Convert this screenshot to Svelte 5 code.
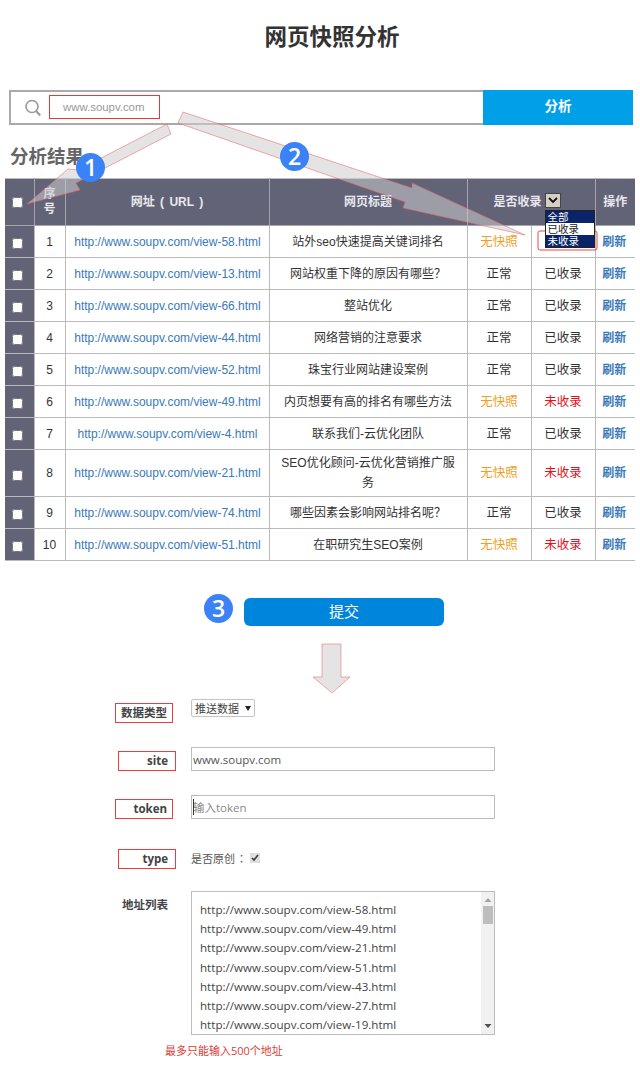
<script lang="ts">
  const rows = [
    { id: 58, title: '站外seo快速提高关键词排名', snap: false, indexed: true },
    { id: 13, title: '网站权重下降的原因有哪些？', snap: true, indexed: true },
    { id: 66, title: '整站优化', snap: true, indexed: true },
    { id: 44, title: '网络营销的注意要求', snap: true, indexed: true },
    { id: 52, title: '珠宝行业网站建设案例', snap: true, indexed: true },
    { id: 49, title: '内页想要有高的排名有哪些方法', snap: false, indexed: false },
    { id: 4, title: '联系我们-云优化团队', snap: true, indexed: true },
    { id: 21, title: 'SEO优化顾问-云优化营销推广服务', snap: false, indexed: false },
    { id: 74, title: '哪些因素会影响网站排名呢？', snap: true, indexed: true },
    { id: 51, title: '在职研究生SEO案例', snap: false, indexed: false }
  ];

  const urls = [58, 49, 21, 51, 43, 27, 19];
</script>

<div class="page">
  <h1>网页快照分析</h1>

  <div class="search">
    <svg class="search-icon" width="20" height="20" viewBox="0 0 20 20">
      <circle cx="9" cy="8.5" r="6" fill="none" stroke="#999" stroke-width="1.6" />
      <path d="M13.2 13l4 4.5" stroke="#999" stroke-width="2" fill="none" />
    </svg>
    <div class="search-input">www.soupv.com</div>
    <div class="search-btn">分析</div>
  </div>

  <h2>分析结果</h2>

  <table>
    <colgroup>
      <col style="width:29px" />
      <col style="width:31px" />
      <col style="width:204px" />
      <col style="width:198px" />
      <col style="width:64px" />
      <col style="width:64px" />
      <col style="width:40px" />
    </colgroup>
    <thead>
      <tr>
        <th><input type="checkbox" /></th>
        <th>序号</th>
        <th class="url-head">网址 ( URL )</th>
        <th>网页标题</th>
        <th colspan="2" class="status-head">
          <span class="status-label">是否收录</span>
          <span class="filter">
            <svg width="10" height="7" viewBox="0 0 10 7"><path d="M1 1l4 4 4-4" fill="none" stroke="#111" stroke-width="1.8" /></svg>
          </span>
          <div class="filter-menu">
            <div class="on">全部</div>
            <div>已收录</div>
            <div class="on">未收录</div>
          </div>
        </th>
        <th>操作</th>
      </tr>
    </thead>
    <tbody>
      {#each rows as row, i}
        <tr>
          <td class="check"><input type="checkbox" /></td>
          <td class="num">{i + 1}</td>
          <td class="url">http://www.soupv.com/view-{row.id}.html</td>
          <td class="title">{row.title}</td>
          <td class="state" class:warn={!row.snap}>{row.snap ? '正常' : '无快照'}</td>
          <td class="state" class:bad={!row.indexed}>{row.indexed ? '已收录' : '未收录'}</td>
          <td class="refresh">刷新</td>
        </tr>
      {/each}
    </tbody>
  </table>

  <div class="submit">提交</div>

  <div class="form">
    <div class="row">
      <div class="label boxed">数据类型</div>
      <div class="select">推送数据<span class="caret"></span></div>
    </div>
    <div class="row">
      <div class="label boxed wide">site</div>
      <div class="input">www.soupv.com</div>
    </div>
    <div class="row">
      <div class="label boxed">token</div>
      <div class="input placeholder"><span class="cursor"></span>输入token</div>
    </div>
    <div class="row type-row">
      <div class="label boxed wide">type</div>
      <div class="original">是否原创<span class="colon">：</span><input type="checkbox" checked /></div>
    </div>
    <div class="row list-row">
      <div class="label plain">地址列表</div>
      <div class="textarea">
        <div class="lines">
          {#each urls as id}
            <div>http://www.soupv.com/view-{id}.html</div>
          {/each}
        </div>
        <div class="scrollbar">
          <svg width="8" height="6" viewBox="0 0 8 6"><path d="M4 1l3.5 4H.5z" fill="#a3a3a3" /></svg>
          <div class="thumb"></div>
          <svg class="down" width="8" height="6" viewBox="0 0 8 6"><path d="M4 5L.5 1h7z" fill="#505050" /></svg>
        </div>
      </div>
    </div>
    <div class="note">最多只能输入500个地址</div>
  </div>

  <!-- annotations drawn over the screenshot -->
  <svg class="marks" width="640" height="1081" viewBox="0 0 640 1081">
    <g fill="rgba(205,205,205,0.55)" stroke="rgba(235,90,90,0.5)" stroke-width="1">
      <polygon points="167,124 171,134 76,183 80,190 27,204 68,169 78,170" />
      <polygon points="183,112 412,188 412,183 525,235 403,208 405,202 178,123" />
      <polygon points="322,644 341,644 341,677 350,677 332,693 313,677 322,677" />
    </g>
    <rect x="538" y="231" width="59" height="19" rx="2" fill="none" stroke="#ef4444" stroke-width="1" />
  </svg>
  <div class="badge one">1</div>
  <div class="badge two">2</div>
  <div class="badge three">3</div>
</div>

<style>
  :global(body) {
    margin: 0;
    background: #fff;
  }

  .page {
    position: relative;
    width: 640px;
    height: 1081px;
    overflow: hidden;
    font-family: "Liberation Sans", "Noto Sans CJK SC", sans-serif;
    font-size: 12px;
    color: #333;
  }

  h1 {
    margin: 0;
    padding: 23px 0 0 24px;
    height: 29px;
    line-height: 30px;
    text-align: center;
    font-size: 22.5px;
    font-weight: 700;
    color: #333;
  }

  .search {
    display: flex;
    align-items: center;
    box-sizing: border-box;
    width: 624px;
    height: 35px;
    margin: 38px 0 0 9px;
    border: 2px solid #aaa;
    border-right: 0;
  }

  .search-icon {
    margin-left: 12px;
  }

  .search-input {
    box-sizing: border-box;
    width: 111px;
    height: 24px;
    margin: -1px 0 0 6px;
    padding-left: 13px;
    line-height: 22px;
    border: 1px solid #e53935;
    font-size: 11.4px;
    color: #999;
  }

  .search-btn {
    margin: -2px 0 -2px auto;
    width: 150px;
    height: 35px;
    line-height: 33px;
    text-align: center;
    background: #00a0e9;
    color: #fff;
    font-size: 13.5px;
    font-weight: 700;
  }

  h2 {
    margin: 20px 0 0 10px;
    height: 24px;
    line-height: 24px;
    font-size: 18.5px;
    font-weight: 700;
    color: #666;
  }

  table {
    width: 630px;
    margin: 9px 0 0 5px;
    table-layout: fixed;
    border-collapse: collapse;
  }

  th {
    height: 46px;
    padding: 0 4px;
    background: #636378;
    color: #e8e8ee;
    font-size: 12px;
    font-weight: 700;
    line-height: 15px;
    border: 1px solid #a5a5ae;
    border-top-color: #bbb;
  }

  th:first-child {
    padding: 0;
  }

  th:first-child,
  td:first-child {
    border-left: 0;
  }

  th:last-child,
  td:last-child {
    border-right: 0;
  }

  input[type="checkbox"] {
    display: block;
    width: 11px;
    height: 11px;
    margin: 0 0 0 7px;
  }

  .url-head {
    word-spacing: 2px;
  }

  .status-head {
    position: relative;
    text-align: left;
    padding-left: 26px;
  }

  .status-label {
    vertical-align: middle;
  }

  .filter {
    display: inline-flex;
    align-items: center;
    justify-content: center;
    box-sizing: border-box;
    width: 16px;
    height: 15px;
    vertical-align: 2px;
    background: #d6d0c4;
    border: 1px solid #444;
  }

  .filter-menu {
    position: absolute;
    left: 77px;
    top: 31px;
    z-index: 2;
    width: 48px;
    border: 1px solid #222;
    background: #fff;
    color: #222;
    font-size: 10.5px;
    font-weight: 400;
    line-height: 12px;
    text-align: left;
  }

  .filter-menu div {
    padding-left: 2px;
  }

  .filter-menu .on {
    background: #0a246a;
    color: #fff;
  }

  td {
    height: 23px;
    padding: 4px 10px;
    line-height: 20px;
    text-align: center;
    border: 1px solid #bbb;
  }

  tbody tr {
    height: 32px;
  }

  .check {
    padding: 0;
    background: #636378;
  }

  .check input {
    margin-top: 4px;
  }

  .num {
    padding: 0;
  }

  .url {
    padding: 4px 0 4px 1px;
    color: #3a7ab8;
  }

  .title {
    padding: 3px 10px;
    color: #333;
  }

  .state {
    padding: 4px 0;
    font-size: 12.5px;
  }

  .warn {
    color: #f0a01e;
  }

  .bad {
    color: #e8101a;
  }

  .refresh {
    padding: 4px 2px 4px 0;
    color: #3a7ab8;
    font-weight: 700;
  }

  .submit {
    width: 200px;
    height: 28px;
    margin: 37px 0 0 244px;
    line-height: 28px;
    text-align: center;
    border-radius: 6px;
    background: #0085dd;
    color: #fff;
    font-size: 15px;
  }

  .form {
    margin-top: 73px;
    font-family: "Open Sans", "Noto Sans CJK SC", sans-serif;
    font-size: 11.5px;
    color: #444;
  }

  .row {
    display: flex;
    align-items: flex-start;
    height: 48px;
  }

  .label {
    box-sizing: border-box;
    width: 58px;
    height: 20px;
    padding-right: 5px;
    line-height: 18px;
    margin: 4px 18px 0 115px;
    text-align: right;
    font-weight: 700;
    color: #444;
  }

  .boxed {
    border: 1px solid #ee3b3b;
  }

  .wide {
    margin-left: 118px;
    margin-right: 15px;
    padding-right: 7px;
  }

  .plain {
    margin-top: 5px;
  }

  .select {
    display: flex;
    align-items: center;
    box-sizing: border-box;
    width: 64px;
    height: 18px;
    padding-left: 3px;
    border: 1px solid #c4c4c4;
    border-radius: 2px;
    font-size: 11px;
  }

  .caret {
    margin-left: 6px;
    border: 3px solid transparent;
    border-top: 5px solid #222;
    border-bottom: 0;
  }

  .input {
    position: relative;
    box-sizing: border-box;
    width: 304px;
    height: 24px;
    padding-left: 1px;
    line-height: 24px;
    border: 1px solid #bcbcbc;
    font-size: 11.5px;
    color: #555;
  }

  .placeholder {
    color: #888;
  }

  .cursor {
    position: absolute;
    left: 1px;
    top: 3px;
    width: 1px;
    height: 16px;
    background: #333;
  }

  .type-row .label {
    margin-top: 6px;
  }

  .original {
    display: flex;
    align-items: center;
    height: 20px;
    margin-top: 5px;
    color: #555;
    font-size: 11px;
  }

  .colon {
    margin-left: 1px;
    font-family: "Noto Sans CJK TC", sans-serif;
  }

  .original input {
    width: 10px;
    height: 10px;
    margin: 0 0 0 3px;
    accent-color: #e0e0e0;
  }

  .list-row {
    height: 145px;
  }

  .textarea {
    display: flex;
    box-sizing: border-box;
    width: 304px;
    height: 144px;
    border: 1px solid #bcbcbc;
    overflow: hidden;
  }

  .lines {
    flex: 1;
    padding: 8px 0 0 8px;
    font-size: 11.6px;
    line-height: 19.2px;
    color: #444;
  }

  .scrollbar {
    display: flex;
    flex-direction: column;
    align-items: center;
    width: 13px;
    padding-top: 5px;
    box-sizing: border-box;
    background: #f1f1f1;
  }

  .thumb {
    width: 10px;
    height: 18px;
    margin-top: 3px;
    background: #bdbdbd;
  }

  .down {
    margin-top: auto;
    margin-bottom: 5px;
  }

  .note {
    margin: 7px 0 0 165px;
    line-height: 16px;
    color: #d9403a;
    font-size: 11px;
  }

  .marks {
    position: absolute;
    left: 0;
    top: 0;
    pointer-events: none;
  }

  .badge {
    position: absolute;
    width: 29px;
    height: 29px;
    line-height: 29px;
    text-align: center;
    border-radius: 50%;
    background: #3b82f6;
    color: #fff;
    font-family: "Open Sans", sans-serif;
    font-size: 23px;
    font-weight: 600;
  }

  .one {
    left: 76px;
    top: 153px;
  }

  .two {
    left: 280px;
    top: 142px;
  }

  .three {
    left: 204px;
    top: 594px;
  }
</style>
